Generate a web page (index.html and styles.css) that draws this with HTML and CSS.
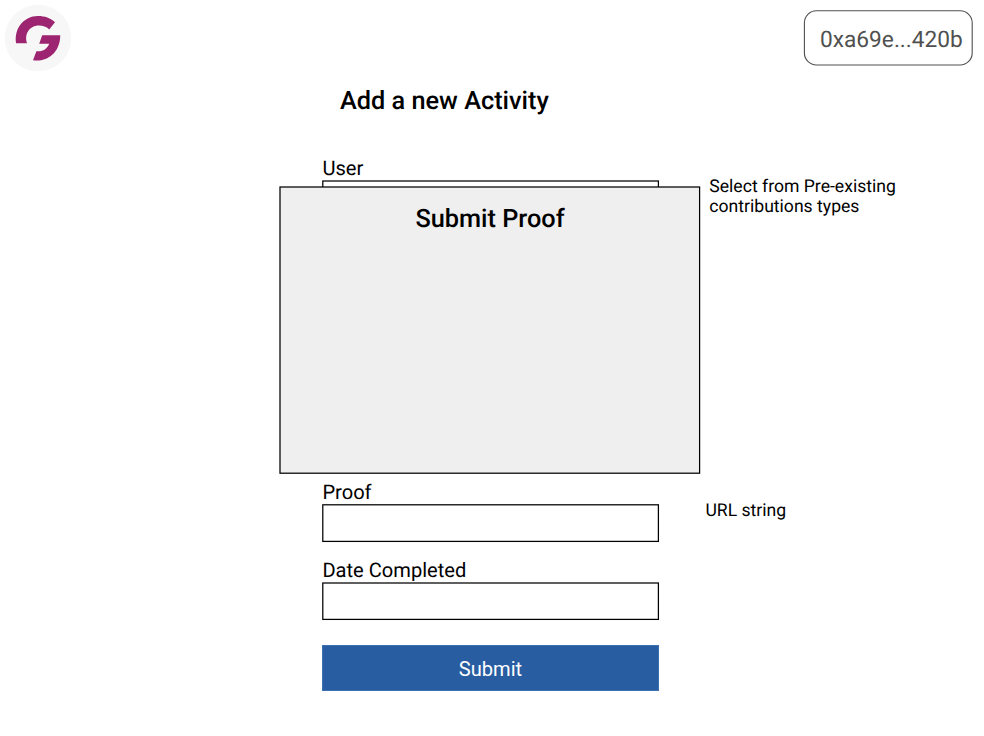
FILE: index.html
```html
<!DOCTYPE html>
<html lang="en">
<head>
<meta charset="utf-8">
<title>Add a new Activity</title>
<link rel="stylesheet" href="styles.css">
</head>
<body>
<header class="topbar">
  <svg class="logo" viewBox="0 0 76 76" aria-hidden="true">
    <circle cx="38" cy="38" r="33.3" fill="#f7f7f7"/>
    <path fill="#9c2470" d="M16.1 43.2C13.8 28.5 24 16.3 37.7 16.1C44.5 16 50.5 18 55 22.3L49.2 29.4C46.3 26.7 42.5 25.5 38.5 25.6C30.2 25.8 23.9 33.5 27 43.2Z"/>
    <path fill="#9c2470" d="M42.2 35.2H60.2C60.5 49.8 50 62.5 33 60.2L36.4 51.2C42 52 47 49.5 49.2 43.8H39.2Z"/>
  </svg>
  <div class="wallet"><svg class="frame" aria-hidden="true"><rect class="wallet-line" x=".4" y=".8" width="167.8" height="54.2" rx="12"/></svg><span class="wallet-text">0xa69e...420b</span></div>
</header>
<main class="page">
  <h1 class="title"><span>Add a new Activity</span></h1>
  <form class="form">
    <div class="row row-user">
      <div class="field">
        <div class="label"><span class="user">User</span></div>
        <div class="box"><svg class="frame" aria-hidden="true"><rect x=".8" y="1" width="335.6" height="36.6"/></svg></div>
      </div>
      <p class="note note-user"><span>Select from Pre-existing</span><br><span>contributions types</span></p>
    </div>
    <div class="row">
      <div class="field">
        <div class="label"><span>Proof</span></div>
        <div class="box"><svg class="frame" aria-hidden="true"><rect x=".8" y=".8" width="335.6" height="36.6"/></svg></div>
      </div>
      <p class="note note-proof"><span>URL string</span></p>
    </div>
    <div class="row">
      <div class="field">
        <div class="label"><span>Date Completed</span></div>
        <div class="box"><svg class="frame" aria-hidden="true"><rect x=".8" y="1" width="335.6" height="36.4"/></svg></div>
      </div>
    </div>
    <button class="submit" type="button"><span>Submit</span></button>
  </form>
  <section class="modal">
    <svg class="frame" aria-hidden="true"><rect class="panel" x="1" y="1" width="419.6" height="286.2"/></svg>
    <h2 class="modal-title"><span>Submit Proof</span></h2>
  </section>
</main>
</body>
</html>
```
FILE: styles.css
```css
* { box-sizing: border-box; }
body {
  margin: 0;
  width: 984px;
  height: 736px;
  position: relative;
  overflow: hidden;
  background: #fff;
  color: #000;
  font-family: Roboto, sans-serif;
  text-rendering: geometricPrecision;
}
h1, h2, p { margin: 0; font-weight: 500; }
.topbar {
  display: flex;
  justify-content: space-between;
  height: 76px;
  padding-right: 11px;
}
.logo { width: 76px; height: 76px; }
.wallet {
  position: relative;
  width: 169px;
  height: 56px;
  margin-top: 10px;
  padding-left: 16px;
  color: #505050;
  font-size: 22.7px;
  line-height: 59px;
  white-space: nowrap;
}
.frame {
  position: absolute;
  inset: 0;
  width: 100%;
  height: 100%;
  overflow: visible;
  fill: none;
  stroke: #000;
  stroke-width: 1.25px;
}
.wallet-line { stroke: #505050; stroke-width: 1.1px; }
.title {
  padding-left: 340px;
  padding-top: 11px;
  height: 80px;
  font-size: 25.3px;
  line-height: 30px;
}
.form { padding-left: 322px; }
.row { display: flex; height: 78px; }
.row-user { height: 324px; }
.field { width: 337px; }
.label {
  height: 24px;
  padding-left: .4px;
  font-size: 20.1px;
  line-height: 25px;
}
.box { position: relative; height: 38px; }
.note {
  font-size: 17.6px;
  line-height: 20px;
  font-weight: 400;
  white-space: nowrap;
}
.note-user { padding: 21px 0 0 50.3px; }
.note-proof { padding: 21px 0 0 46.4px; }
.submit {
  display: block;
  width: 337px;
  height: 46px;
  margin-top: 9px;
  padding: 1px 0 0;
  border: 1px solid #3c70ae;
  background: #295da2;
  color: #fff;
  font-family: inherit;
  font-size: 20.1px;
  line-height: 44px;
}
.modal {
  position: absolute;
  left: 279px;
  top: 186px;
  width: 422px;
  height: 288px;
  padding-top: 19px;
}
.panel { fill: #efefef; }
.modal-title {
  position: relative;
  font-size: 25.3px;
  line-height: 30px;
  text-align: center;
}
```
